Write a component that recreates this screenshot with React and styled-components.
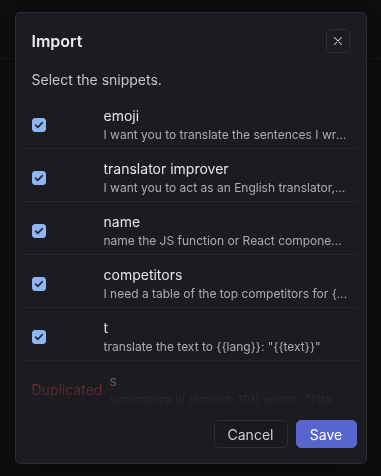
import React, { useState } from "react";
import styled, { createGlobalStyle } from "styled-components";

const GlobalStyle = createGlobalStyle`
  html, body {
    margin: 0;
    padding: 0;
    background: #131317;
    font-family: Inter, "Noto Sans", sans-serif;
    -webkit-font-smoothing: antialiased;
  }
  * { box-sizing: border-box; }
`;

const Page = styled.div`
  width: 100vw;
  height: 100vh;
  background: #131317;
`;

const PageHeader = styled.div`
  height: 59px;
  border-bottom: 1px solid #24252a;
`;

const Overlay = styled.div`
  position: fixed;
  inset: 0;
  display: flex;
  align-items: center;
  justify-content: center;
  background: rgba(8, 8, 10, 0.35);
`;

const Modal = styled.div`
  width: 352px;
  height: 452px;
  display: flex;
  flex-direction: column;
  background: #1b1b20;
  border: 1px solid #2c2d33;
  border-radius: 5px;
  padding: 16px 8px 15px;
  box-shadow: 0 8px 40px rgba(0, 0, 0, 0.5);
`;

const Header = styled.div`
  display: flex;
  align-items: center;
  justify-content: space-between;
  padding: 0 8px;
`;

const Title = styled.h2`
  margin: 0;
  font-size: 16px;
  font-weight: 600;
  color: #ebebee;
`;

const CloseButton = styled.button`
  width: 24px;
  height: 24px;
  padding: 0;
  display: flex;
  align-items: center;
  justify-content: center;
  background: transparent;
  border: 1px solid #2e2f36;
  border-radius: 5px;
  color: #d8d8dc;
  cursor: pointer;
`;

const Subtitle = styled.p`
  margin: 16px 0 0;
  padding: 0 8px;
  font-size: 14px;
  line-height: 22px;
  color: #c6c6cb;
`;

const List = styled.div`
  margin-top: 5px;
  flex: 1;
  min-height: 0;
  overflow-y: auto;
  scrollbar-width: none;
  -webkit-mask-image: linear-gradient(to bottom, #000 calc(100% - 56px), transparent calc(100% - 4px));
  mask-image: linear-gradient(to bottom, #000 calc(100% - 56px), transparent calc(100% - 4px));
  &::-webkit-scrollbar { display: none; }
`;

const Row = styled.label`
  display: flex;
  align-items: center;
  gap: 7px;
  padding: 10px 10px 5px 8px;
  border-bottom: 1px solid #26272c;
  cursor: ${({ $disabled }) => ($disabled ? "default" : "pointer")};
`;

const Lead = styled.div`
  min-width: 65px;
  display: flex;
  align-items: center;
`;

const Box = styled.span`
  width: 14px;
  height: 14px;
  border-radius: 3px;
  display: flex;
  align-items: center;
  justify-content: center;
  background: ${({ $checked }) => ($checked ? "#8fb6f4" : "transparent")};
  border: 1px solid ${({ $checked }) => ($checked ? "#8fb6f4" : "#55565e")};
`;

const DupLabel = styled.span`
  font-size: 14px;
  line-height: 20px;
  color: #cf4a50;
  white-space: nowrap;
`;

const Info = styled.div`
  flex: 1;
  min-width: 0;
  opacity: ${({ $disabled }) => ($disabled ? 0.6 : 1)};
`;

const Name = styled.div`
  font-size: 14px;
  line-height: 20px;
  color: #e6e6e9;
  white-space: nowrap;
  overflow: hidden;
  text-overflow: ellipsis;
`;

const Desc = styled.div`
  font-size: 12px;
  line-height: 17px;
  color: #acacb2;
  white-space: nowrap;
  overflow: hidden;
  text-overflow: ellipsis;
`;

const Footer = styled.div`
  display: flex;
  justify-content: flex-end;
  gap: 8px;
  margin-top: 8px;
  padding-right: 1px;
`;

const Button = styled.button`
  height: 28px;
  width: ${({ $primary }) => ($primary ? "61px" : "74px")};
  padding: 0;
  border-radius: 5px;
  font-family: Inter, "Noto Sans", sans-serif;
  font-size: 14px;
  cursor: pointer;
  color: ${({ $primary }) => ($primary ? "#ffffff" : "#cfcfd4")};
  background: ${({ $primary }) => ($primary ? "#5865cc" : "#19191e")};
  border: 1px solid ${({ $primary }) => ($primary ? "#5865cc" : "#2d2e35")};
`;

const snippets = [
  { name: "emoji", text: "I want you to translate the sentences I wrote into emojis." },
  { name: "translator improver", text: "I want you to act as an English translator, spelling corrector and improver." },
  { name: "name", text: "name the JS function or React component for the code below" },
  { name: "competitors", text: "I need a table of the top competitors for {{product}}" },
  { name: "t", text: 'translate the text to {{lang}}: "{{text}}"' },
  { name: "s", text: 'summarize in {{count: 10}} words: "{{text}}" and keep it short', duplicated: true },
  { name: "fix", text: "fix the grammar of the text below", duplicated: true },
];

const Check = () => (
  <svg width="10" height="10" viewBox="0 0 24 24" fill="none" stroke="#262731" strokeWidth="4" strokeLinecap="round" strokeLinejoin="round">
    <path d="M4 12.5l5 5L20 6.5" />
  </svg>
);

const App = () => {
  const [checked, setChecked] = useState(snippets.map((s) => !s.duplicated));
  const toggle = (i) => setChecked((c) => c.map((v, j) => (j === i ? !v : v)));

  return (
    <>
      <GlobalStyle />
      <Page>
        <PageHeader />
        <Overlay>
          <Modal>
            <Header>
              <Title>Import</Title>
              <CloseButton aria-label="Close">
                <svg width="14" height="14" viewBox="0 0 24 24" fill="none" stroke="currentColor" strokeWidth="1.8" strokeLinecap="round">
                  <path d="M6 6l12 12M18 6L6 18" />
                </svg>
              </CloseButton>
            </Header>
            <Subtitle>Select the snippets.</Subtitle>
            <List>
              {snippets.map((s, i) => (
                <Row key={s.name} $disabled={s.duplicated} onClick={() => !s.duplicated && toggle(i)}>
                  <Lead>
                    {s.duplicated ? (
                      <DupLabel>Duplicated</DupLabel>
                    ) : (
                      <Box $checked={checked[i]}>{checked[i] && <Check />}</Box>
                    )}
                  </Lead>
                  <Info $disabled={s.duplicated}>
                    <Name>{s.name}</Name>
                    <Desc>{s.text}</Desc>
                  </Info>
                </Row>
              ))}
            </List>
            <Footer>
              <Button>Cancel</Button>
              <Button $primary>Save</Button>
            </Footer>
          </Modal>
        </Overlay>
      </Page>
    </>
  );
};

export default App;
